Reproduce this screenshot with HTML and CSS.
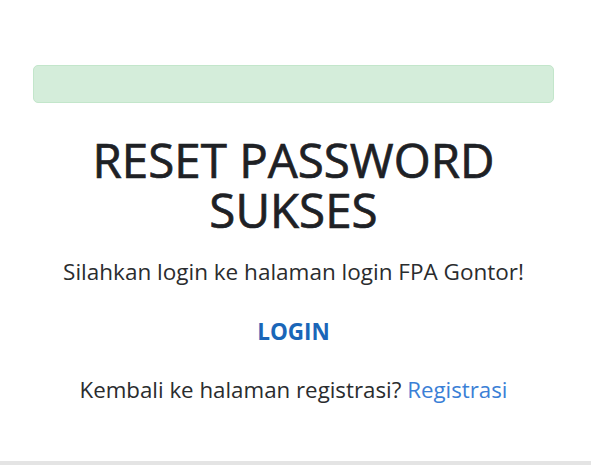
FILE: index.html
```html
<!DOCTYPE html>
<html lang="id">
<head>
<meta charset="utf-8">
<title>Reset Password Sukses</title>
<link rel="stylesheet" href="styles.css">
</head>
<body>
<div class="page">
  <main class="container">
    <div class="alert"></div>
    <h1 class="title">RESET PASSWORD<br>SUKSES</h1>
    <p class="lead">Silahkan login ke halaman login FPA Gontor!</p>
    <a class="login" href="#">LOGIN</a>
    <p class="back">Kembali ke halaman registrasi? <a class="reg" href="#">Registrasi</a></p>
  </main>
  <div class="footer-strip"></div>
</div>
</body>
</html>
```
FILE: styles.css
```css
* { box-sizing: border-box; }
html, body { margin: 0; padding: 0; }
body {
  background: #fff;
  font-family: "Open Sans", "Noto Sans", sans-serif;
  color: #212529;
}
.page {
  height: 465px;
  display: flex;
  flex-direction: column;
}
.container {
  flex: 1;
  width: 521px;
  margin: 0 0 0 33px;
  padding-top: 65px;
  display: flex;
  flex-direction: column;
  align-items: center;
}
.alert {
  width: 100%;
  height: 38px;
  background: #d4edda;
  border: 1px solid #c3e6cb;
  border-radius: 5px;
}
.title {
  margin: 32px 0 0;
  font-size: 47.5px;
  line-height: 50px;
  font-weight: 400;
  -webkit-text-stroke: 0.7px currentColor;
  text-align: center;
  color: #1e2125;
  white-space: nowrap;
}
.lead {
  margin: 22px 0 0;
  font-size: 22.5px;
  line-height: 30px;
  white-space: nowrap;
  color: #2a2c2e;
}
.login {
  margin-top: 30px;
  font-size: 22.5px;
  font-weight: 700;
  color: #1a66b8;
  text-decoration: none;
  line-height: 30px;
}
.back {
  margin: 28px 0 0;
  font-size: 22.3px;
  line-height: 30px;
  white-space: nowrap;
  color: #2a2c2e;
}
.reg {
  color: #3b7fd6;
  text-decoration: none;
}
.footer-strip {
  height: 4px;
  background: #e4e4e4;
}
```
